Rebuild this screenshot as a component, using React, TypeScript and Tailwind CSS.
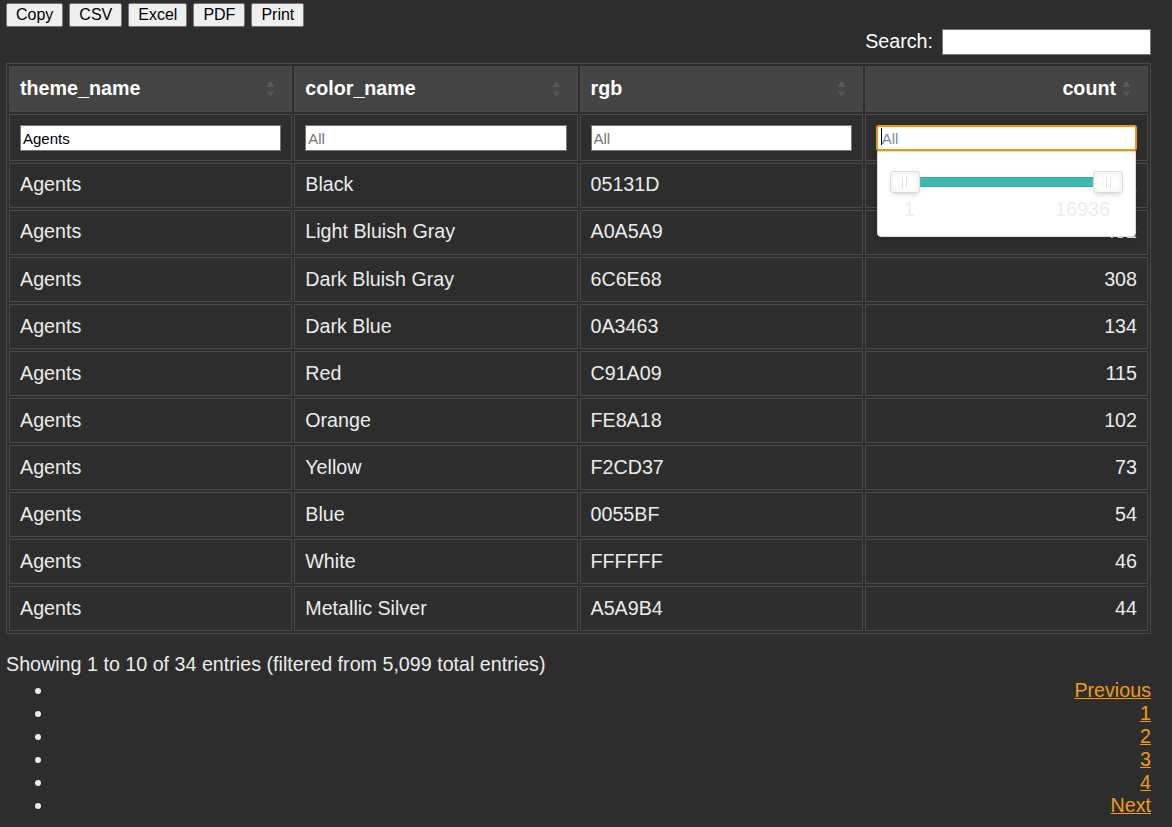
import React from 'react';

const rows: [string, string, string, string][] = [
  ['Agents', 'Black', '05131D', '531'],
  ['Agents', 'Light Bluish Gray', 'A0A5A9', '452'],
  ['Agents', 'Dark Bluish Gray', '6C6E68', '308'],
  ['Agents', 'Dark Blue', '0A3463', '134'],
  ['Agents', 'Red', 'C91A09', '115'],
  ['Agents', 'Orange', 'FE8A18', '102'],
  ['Agents', 'Yellow', 'F2CD37', '73'],
  ['Agents', 'Blue', '0055BF', '54'],
  ['Agents', 'White', 'FFFFFF', '46'],
  ['Agents', 'Metallic Silver', 'A5A9B4', '44'],
];

function SortIcon() {
  return (
    <svg width="9" height="17" viewBox="0 0 9 17" className="absolute right-[16px] top-1/2 -translate-y-1/2">
      <path d="M4.5 0.5 L8.5 6.5 L0.5 6.5 Z" fill="#5b5b5b" />
      <path d="M0.5 11 L8.5 11 L4.5 16.5 Z" fill="#555555" />
    </svg>
  );
}

function Handle() {
  return (
    <div className="flex h-[22px] w-[30px] shrink-0 items-center justify-center gap-[3px] rounded-[3px] border border-[#d9d9d9] bg-white shadow-[inset_0_0_1px_#fff,inset_0_1px_7px_#ebebeb,0_3px_6px_-3px_#bbb]">
      <div className="h-[11px] w-px bg-[#e2e2e2]" />
      <div className="h-[11px] w-px bg-[#e2e2e2]" />
    </div>
  );
}

const btn =
  'h-[24px] rounded-[2px] border border-[#767676] bg-[#efefef] px-[9px] text-[16px] leading-none text-black';
const th = 'relative h-[46.5px] border border-[#4a4a4a] bg-[#444444] px-[10px] py-0 font-bold';
const td = 'h-[45.1px] border border-[#4a4a4a] px-[10px] py-0';
const ftd = 'h-[46.5px] border border-[#4a4a4a] px-[10px] py-0';
const filterInput =
  'h-[26px] w-full border border-[#767676] bg-white px-[2px] text-[15px] text-black placeholder:text-[#757575] outline-none';

export default function App() {
  return (
    <div
      className="min-h-[827px] w-full bg-[#2d2d2d] text-[19.7px] text-[#ececec]"
      style={{ fontFamily: '"Liberation Sans", Arial, sans-serif' }}
    >
      <div className="ml-[6px] flex w-[1145px] flex-col">
        <div className="flex gap-[6px] pt-[3px]">
          {['Copy', 'CSV', 'Excel', 'PDF', 'Print'].map((b) => (
            <button key={b} className={btn}>
              {b}
            </button>
          ))}
        </div>

        <div className="flex items-center justify-end gap-[9px]">
          <span className="text-white">Search:</span>
          <input className="h-[26px] w-[209px] border border-[#767676] bg-white outline-none" />
        </div>

        <table className="mt-[6px] w-full table-fixed border-separate border-spacing-[2px] border border-[#4a4a4a]">
          <thead>
            <tr className="text-white">
              <th className={`${th} text-left`}>
                theme_name
                <SortIcon />
              </th>
              <th className={`${th} text-left`}>
                color_name
                <SortIcon />
              </th>
              <th className={`${th} text-left`}>
                rgb
                <SortIcon />
              </th>
              <th className={`${th} pr-[31px] text-right`}>
                count
                <SortIcon />
              </th>
            </tr>
            <tr>
              <td className={ftd}>
                <input className={filterInput} defaultValue="Agents" />
              </td>
              <td className={ftd}>
                <input className={filterInput} placeholder="All" />
              </td>
              <td className={ftd}>
                <input className={filterInput} placeholder="All" />
              </td>
              <td className={`${ftd} relative`}>
                <div className="relative">
                  <input
                    className="h-[26px] w-full rounded-[3px] border-2 border-[#e69b12] bg-white px-[4px] text-[15px] text-black placeholder:text-[#7a8aa0] outline-none"
                    placeholder="All"
                  />
                  <div className="absolute left-[5px] top-[5px] h-[17px] w-px bg-black" />
                </div>
                {/* range slider dropdown */}
                <div className="absolute left-[11px] right-[11px] top-[36px] z-10 flex h-[86px] flex-col rounded-b-[4px] border border-[#dcdcdc] bg-white px-[12px] pt-[19px] shadow-[0_2px_4px_rgba(0,0,0,0.15)]">
                  <div className="relative flex items-center justify-between">
                    <div className="absolute left-px right-px top-1/2 h-[10px] -translate-y-1/2 rounded-[2px] border border-[#36a89e] bg-[#3fb8af]" />
                    <div className="relative">
                      <Handle />
                    </div>
                    <div className="relative">
                      <Handle />
                    </div>
                  </div>
                  <div className="mt-[5px] flex justify-between pl-[14px] pr-[13px] leading-[23px] text-[#ececec]">
                    <span>1</span>
                    <span>16936</span>
                  </div>
                </div>
              </td>
            </tr>
          </thead>
          <tbody>
            {rows.map((r) => (
              <tr key={r[1]}>
                <td className={td}>{r[0]}</td>
                <td className={td}>{r[1]}</td>
                <td className={td}>{r[2]}</td>
                <td className={`${td} text-right`}>{r[3]}</td>
              </tr>
            ))}
          </tbody>
        </table>

        <div className="mt-[19px] leading-[23px]">
          Showing 1 to 10 of 34 entries (filtered from 5,099 total entries)
        </div>
        <ul className="mt-[3px] list-disc pl-[48px] leading-[23px]">
          {['Previous', '1', '2', '3', '4', 'Next'].map((p) => (
            <li key={p} className="text-right">
              <a href="#" className="text-[#f39c12] underline">
                {p}
              </a>
            </li>
          ))}
        </ul>
      </div>
    </div>
  );
}
